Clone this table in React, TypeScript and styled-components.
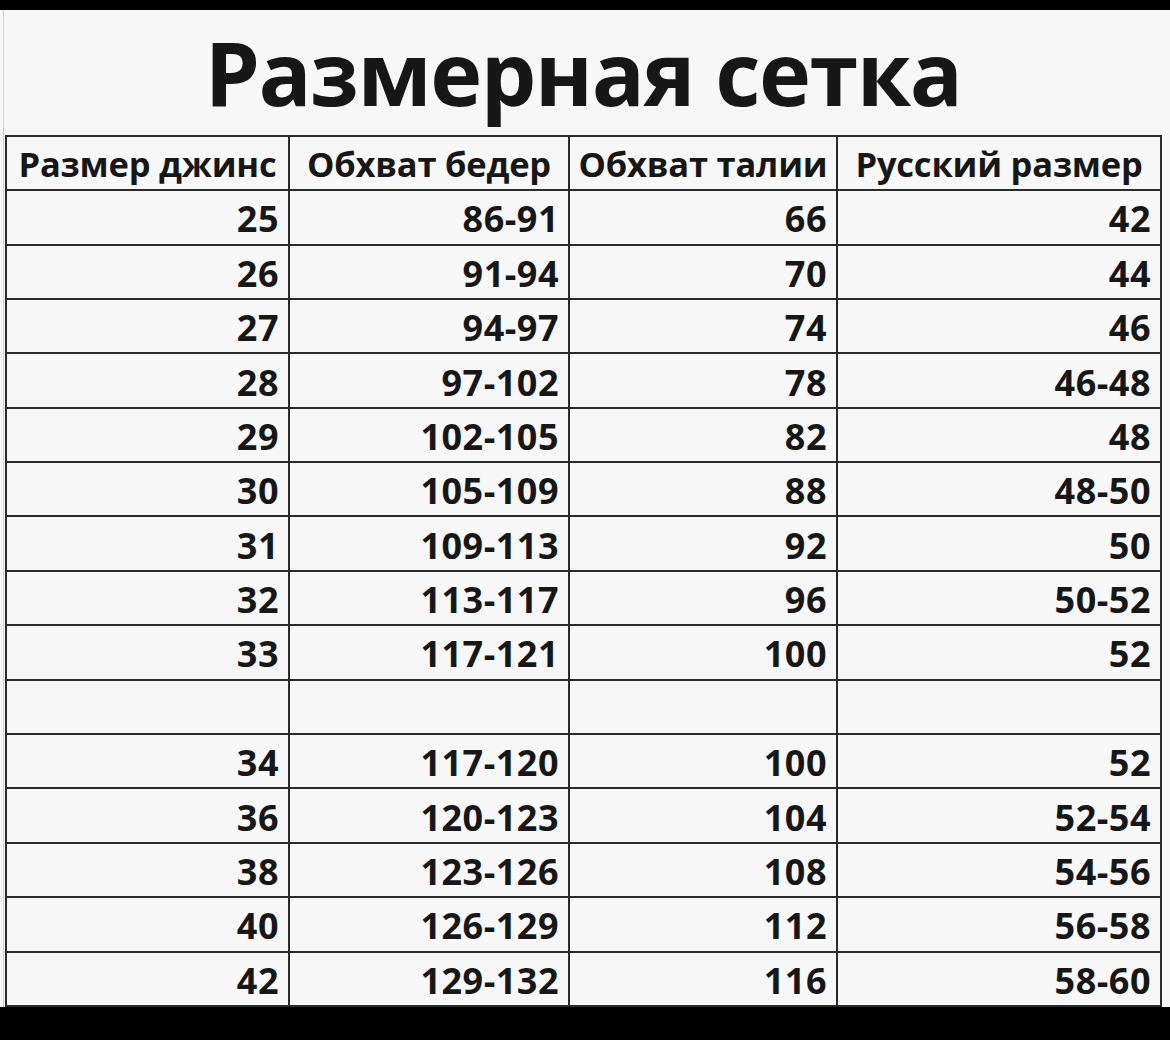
import styled, { createGlobalStyle } from 'styled-components';

type Row = {
  jeans: string;
  hips: string;
  waist: string;
  ru: string;
};

const rows: (Row | null)[] = [
  { jeans: '25', hips: '86-91', waist: '66', ru: '42' },
  { jeans: '26', hips: '91-94', waist: '70', ru: '44' },
  { jeans: '27', hips: '94-97', waist: '74', ru: '46' },
  { jeans: '28', hips: '97-102', waist: '78', ru: '46-48' },
  { jeans: '29', hips: '102-105', waist: '82', ru: '48' },
  { jeans: '30', hips: '105-109', waist: '88', ru: '48-50' },
  { jeans: '31', hips: '109-113', waist: '92', ru: '50' },
  { jeans: '32', hips: '113-117', waist: '96', ru: '50-52' },
  { jeans: '33', hips: '117-121', waist: '100', ru: '52' },
  null,
  { jeans: '34', hips: '117-120', waist: '100', ru: '52' },
  { jeans: '36', hips: '120-123', waist: '104', ru: '52-54' },
  { jeans: '38', hips: '123-126', waist: '108', ru: '54-56' },
  { jeans: '40', hips: '126-129', waist: '112', ru: '56-58' },
  { jeans: '42', hips: '129-132', waist: '116', ru: '58-60' },
];

const columns = [
  { title: 'Размер джинс', width: 283 },
  { title: 'Обхват бедер', width: 280 },
  { title: 'Обхват талии', width: 268 },
  { title: 'Русский размер', width: 324 },
];

const App = () => {
  return (
    <>
      <GlobalStyle />
      <Screen>
        <Sheet>
          <GridLine />
          <Content>
            <Title>Размерная сетка</Title>
            <SizeTable>
              <colgroup>
                {columns.map((c) => (
                  <col key={c.title} style={{ width: c.width }} />
                ))}
              </colgroup>
              <thead>
                <tr>
                  {columns.map((c) => (
                    <HeadCell key={c.title}>{c.title}</HeadCell>
                  ))}
                </tr>
              </thead>
              <tbody>
                {rows.map((r, i) =>
                  r ? (
                    <tr key={i}>
                      <Cell>{r.jeans}</Cell>
                      <Cell>{r.hips}</Cell>
                      <Cell>{r.waist}</Cell>
                      <Cell>{r.ru}</Cell>
                    </tr>
                  ) : (
                    <tr key={i}>
                      <Cell />
                      <Cell />
                      <Cell />
                      <Cell />
                    </tr>
                  )
                )}
              </tbody>
            </SizeTable>
          </Content>
        </Sheet>
      </Screen>
    </>
  );
};

export default App;

const GlobalStyle = createGlobalStyle`
  html, body {
    margin: 0;
    padding: 0;
    background: #000;
  }
`;

const Screen = styled.div`
  width: 1170px;
  height: 1040px;
  background: #000;
  padding-top: 10px;
  box-sizing: border-box;
`;

const Sheet = styled.div`
  display: flex;
  width: 1170px;
  height: 997px;
  overflow: hidden;
  background: #f7f7f7;
  font-family: 'Open Sans', 'Noto Sans', sans-serif;
  color: #171717;
`;

const GridLine = styled.div`
  width: 1px;
  margin-left: 3px;
  margin-right: 1px;
  background: #cfcfcf;
  flex-shrink: 0;
`;

const Content = styled.div`
  display: flex;
  flex-direction: column;
  width: 1156px;
`;

const Title = styled.h1`
  margin: 0;
  height: 126px;
  box-sizing: border-box;
  padding-top: 12px;
  text-align: center;
  font-size: 88px;
  line-height: 100px;
  font-weight: 700;
  letter-spacing: -1.5px;
`;

const SizeTable = styled.table`
  border-collapse: collapse;
  table-layout: fixed;
  width: 1156px;
`;

const HeadCell = styled.th`
  height: 52px;
  padding: 0;
  border: 2px solid #2a2a2a;
  font-size: 34.5px;
  font-weight: 700;
  letter-spacing: -0.2px;
  text-align: center;
  white-space: nowrap;
  overflow: hidden;
`;

const Cell = styled.td`
  height: 54.4px;
  padding: 4px 9px 0 0;
  box-sizing: border-box;
  border: 2px solid #2a2a2a;
  font-size: 36px;
  line-height: 42px;
  font-weight: 700;
  letter-spacing: 0.5px;
  text-align: right;
`;
